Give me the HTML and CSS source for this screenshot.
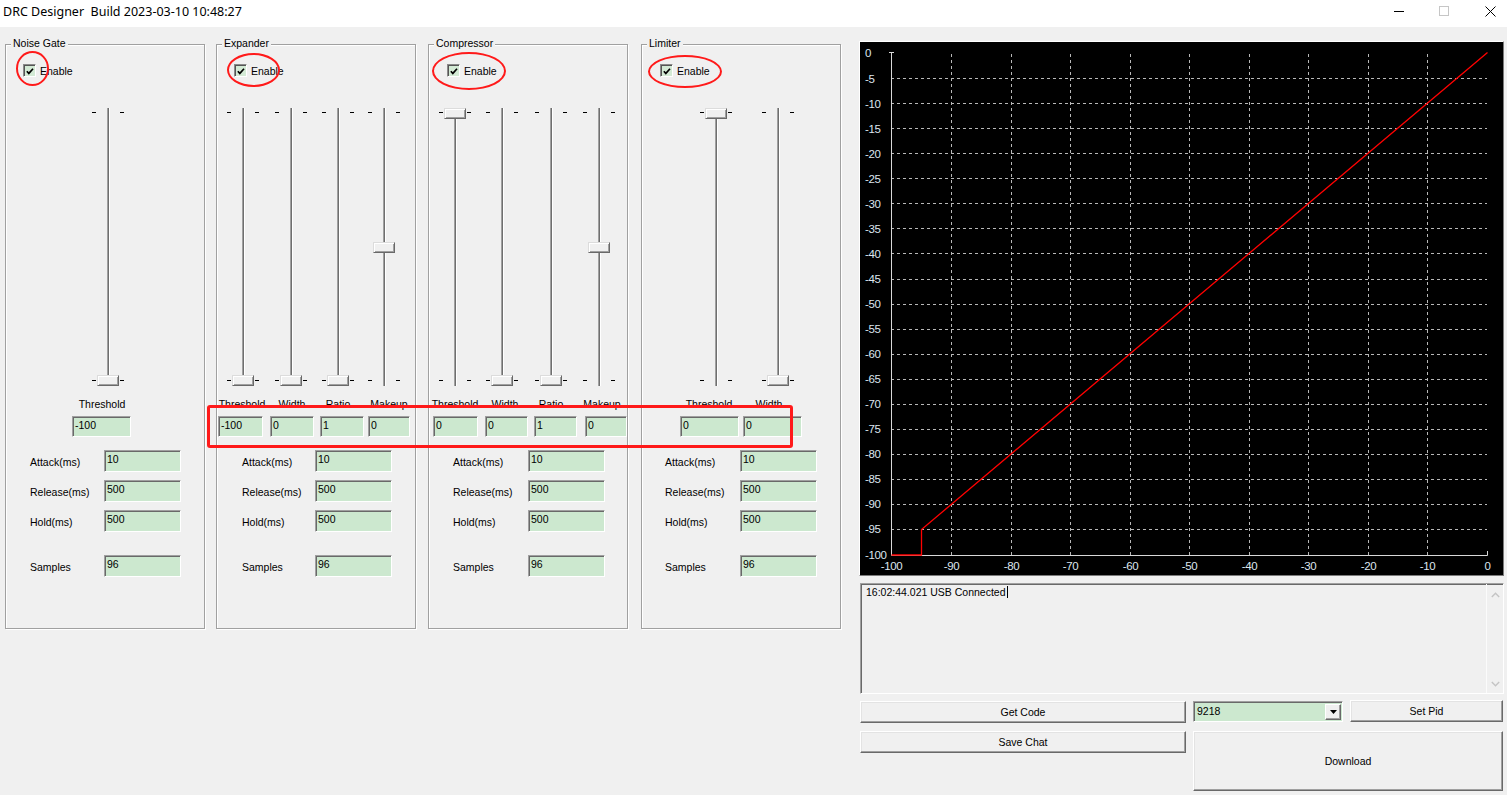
FILE: index.html
```html
<!DOCTYPE html>
<html lang="en">
<head>
<meta charset="utf-8">
<title>DRC Designer</title>
<link rel="stylesheet" href="styles.css">
</head>
<body>
<div class="window">
  <header class="titlebar">
    <span class="title">DRC Designer  Build 2023-03-10 10:48:27</span>
    <div class="wincontrols">
      <span class="wc-min"></span>
      <span class="wc-max"></span>
      <svg class="wc-close" width="11" height="11" viewBox="0 0 11 11"><path d="M0.5 0.5 L10.5 10.5 M10.5 0.5 L0.5 10.5" stroke="#000" stroke-width="1" fill="none"/></svg>
    </div>
  </header>

  <main class="client">
    <div class="groups">
      <!-- Noise Gate -->
      <section class="group ng">
        <span class="legend">Noise Gate</span>
        <label class="check"><span class="cb"><svg width="11" height="11" viewBox="0 0 11 11"><path d="M2 5.2 L4.2 7.6 L8.8 2.4" stroke="#000" stroke-width="1.8" fill="none"/></svg></span><span>Enable</span></label>
        <div class="sliders">
          <div class="slider"><span class="ticks"></span><span class="track"></span><span class="thumb bot"></span></div>
        </div>
        <div class="labels"><span>Threshold</span></div>
        <div class="edits"><span class="edit w59">-100</span></div>
        <div class="param first"><span class="plabel">Attack(ms)</span><span class="edit pedit">10</span></div>
        <div class="param"><span class="plabel">Release(ms)</span><span class="edit pedit">500</span></div>
        <div class="param"><span class="plabel">Hold(ms)</span><span class="edit pedit">500</span></div>
        <div class="param samples"><span class="plabel">Samples</span><span class="edit pedit">96</span></div>
      </section>

      <!-- Expander -->
      <section class="group exp">
        <span class="legend">Expander</span>
        <label class="check"><span class="cb"><svg width="11" height="11" viewBox="0 0 11 11"><path d="M2 5.2 L4.2 7.6 L8.8 2.4" stroke="#000" stroke-width="1.8" fill="none"/></svg></span><span>Enable</span></label>
        <div class="sliders">
          <div class="slider"><span class="ticks"></span><span class="track"></span><span class="thumb bot"></span></div>
          <div class="slider"><span class="ticks"></span><span class="track"></span><span class="thumb bot"></span></div>
          <div class="slider"><span class="ticks"></span><span class="track"></span><span class="thumb bot"></span></div>
          <div class="slider"><span class="ticks"></span><span class="track"></span><span class="thumb mid"></span></div>
        </div>
        <div class="labels"><span>Threshold</span><span>Width</span><span>Ratio</span><span>Makeup</span></div>
        <div class="edits"><span class="edit w45">-100</span><span class="edit w44">0</span><span class="edit w44">1</span><span class="edit w42">0</span></div>
        <div class="param first"><span class="plabel">Attack(ms)</span><span class="edit pedit">10</span></div>
        <div class="param"><span class="plabel">Release(ms)</span><span class="edit pedit">500</span></div>
        <div class="param"><span class="plabel">Hold(ms)</span><span class="edit pedit">500</span></div>
        <div class="param samples"><span class="plabel">Samples</span><span class="edit pedit">96</span></div>
      </section>

      <!-- Compressor -->
      <section class="group comp">
        <span class="legend">Compressor</span>
        <label class="check"><span class="cb"><svg width="11" height="11" viewBox="0 0 11 11"><path d="M2 5.2 L4.2 7.6 L8.8 2.4" stroke="#000" stroke-width="1.8" fill="none"/></svg></span><span>Enable</span></label>
        <div class="sliders">
          <div class="slider"><span class="ticks"></span><span class="track"></span><span class="thumb top"></span></div>
          <div class="slider"><span class="ticks"></span><span class="track"></span><span class="thumb bot"></span></div>
          <div class="slider"><span class="ticks"></span><span class="track"></span><span class="thumb bot"></span></div>
          <div class="slider"><span class="ticks"></span><span class="track"></span><span class="thumb mid"></span></div>
        </div>
        <div class="labels"><span>Threshold</span><span>Width</span><span>Ratio</span><span>Makeup</span></div>
        <div class="edits"><span class="edit w45">0</span><span class="edit w43">0</span><span class="edit w43">1</span><span class="edit w42">0</span></div>
        <div class="param first"><span class="plabel">Attack(ms)</span><span class="edit pedit">10</span></div>
        <div class="param"><span class="plabel">Release(ms)</span><span class="edit pedit">500</span></div>
        <div class="param"><span class="plabel">Hold(ms)</span><span class="edit pedit">500</span></div>
        <div class="param samples"><span class="plabel">Samples</span><span class="edit pedit">96</span></div>
      </section>

      <!-- Limiter -->
      <section class="group lim">
        <span class="legend">Limiter</span>
        <label class="check"><span class="cb"><svg width="11" height="11" viewBox="0 0 11 11"><path d="M2 5.2 L4.2 7.6 L8.8 2.4" stroke="#000" stroke-width="1.8" fill="none"/></svg></span><span>Enable</span></label>
        <div class="sliders">
          <div class="slider"><span class="ticks"></span><span class="track"></span><span class="thumb top"></span></div>
          <div class="slider"><span class="ticks"></span><span class="track"></span><span class="thumb bot"></span></div>
        </div>
        <div class="labels"><span>Threshold</span><span>Width</span></div>
        <div class="edits"><span class="edit w59">0</span><span class="edit w59">0</span></div>
        <div class="param first"><span class="plabel">Attack(ms)</span><span class="edit pedit">10</span></div>
        <div class="param"><span class="plabel">Release(ms)</span><span class="edit pedit">500</span></div>
        <div class="param"><span class="plabel">Hold(ms)</span><span class="edit pedit">500</span></div>
        <div class="param samples"><span class="plabel">Samples</span><span class="edit pedit">96</span></div>
      </section>
    </div>

    <div class="right">
      <div class="chart">
        <svg width="643" height="533" viewBox="0 0 643 533">
          <g stroke="#b8b8b8" stroke-width="1" stroke-dasharray="3 3" fill="none">
            <path d="M31 36.5H627M31 61.5H627M31 86.5H627M31 111.5H627M31 136.5H627M31 161.5H627M31 186.5H627M31 211.5H627M31 237.5H627M31 262.5H627M31 287.5H627M31 312.5H627M31 337.5H627M31 362.5H627M31 387.5H627M31 412.5H627M31 437.5H627M31 462.5H627M31 487.5H627"/>
            <path d="M91.5 12V513M151.5 12V513M210.5 12V513M270.5 12V513M329.5 12V513M389.5 12V513M448.5 12V513M508.5 12V513M567.5 12V513"/>
          </g>
          <g stroke="#d8d8d8" stroke-width="1" fill="none">
            <path d="M31.5 10V513.5H627.5V509"/>
            <path d="M29 10.5H34"/>
          </g>
          <polyline points="31.5,513 61.5,513 61.5,487.5 627.5,10.5" stroke="#ff0000" stroke-width="1.3" fill="none"/>
          <g class="ylab" fill="#dde6ef" font-family="Liberation Sans, Arial, sans-serif" font-size="11.5" letter-spacing="-0.4">
            <text x="5" y="15">0</text>
            <text x="5" y="40.5">-5</text>
            <text x="5" y="65.5">-10</text>
            <text x="5" y="90.5">-15</text>
            <text x="5" y="115.5">-20</text>
            <text x="5" y="140.5">-25</text>
            <text x="5" y="165.5">-30</text>
            <text x="5" y="190.5">-35</text>
            <text x="5" y="215.5">-40</text>
            <text x="5" y="241">-45</text>
            <text x="5" y="266">-50</text>
            <text x="5" y="291">-55</text>
            <text x="5" y="316">-60</text>
            <text x="5" y="341">-65</text>
            <text x="5" y="366">-70</text>
            <text x="5" y="391">-75</text>
            <text x="5" y="416">-80</text>
            <text x="5" y="441">-85</text>
            <text x="5" y="466">-90</text>
            <text x="5" y="491">-95</text>
            <text x="5" y="517">-100</text>
          </g>
          <g fill="#dde6ef" font-family="Liberation Sans, Arial, sans-serif" font-size="11.5" letter-spacing="-0.4" text-anchor="middle">
            <text x="31.5" y="528">-100</text>
            <text x="91.5" y="528">-90</text>
            <text x="151.5" y="528">-80</text>
            <text x="210.5" y="528">-70</text>
            <text x="270.5" y="528">-60</text>
            <text x="329.5" y="528">-50</text>
            <text x="389.5" y="528">-40</text>
            <text x="448.5" y="528">-30</text>
            <text x="508.5" y="528">-20</text>
            <text x="567.5" y="528">-10</text>
            <text x="627.5" y="528">0</text>
          </g>
        </svg>
      </div>

      <div class="log">
        <div class="logtext">16:02:44.021 USB Connected<span class="caret"></span></div>
        <div class="vscroll">
          <svg width="9" height="6" viewBox="0 0 9 6"><path d="M0.8 5 L4.5 1.2 L8.2 5" stroke="#c4c4c4" stroke-width="1.4" fill="none"/></svg>
          <svg width="9" height="6" viewBox="0 0 9 6"><path d="M0.8 1 L4.5 4.8 L8.2 1" stroke="#c4c4c4" stroke-width="1.4" fill="none"/></svg>
        </div>
      </div>

      <div class="buttons">
        <button class="btn getcode">Get Code</button>
        <div class="combo"><span class="combo-val">9218</span><span class="combo-btn"><svg width="7" height="4" viewBox="0 0 7 4"><path d="M0 0H7L3.5 4Z" fill="#000"/></svg></span></div>
        <button class="btn setpid">Set Pid</button>
        <button class="btn savechat">Save Chat</button>
        <button class="btn download">Download</button>
      </div>
    </div>
  </main>

  <div class="annot">
    <span class="ring ring-ng"></span>
    <span class="ring ring-exp"></span>
    <span class="ring ring-comp"></span>
    <span class="ring ring-lim"></span>
    <span class="rect-mark"></span>
  </div>
</div>
</body>
</html>
```

FILE: styles.css
```css
* { box-sizing: border-box; }
html, body { margin: 0; padding: 0; }
body {
  width: 1507px;
  height: 795px;
  overflow: hidden;
  background: #f0f0f0;
  font-family: "Liberation Sans", Arial, sans-serif;
  font-size: 10.5px;
  color: #000;
}
.window { position: relative; width: 1507px; height: 795px; }

/* title bar */
.titlebar {
  height: 27px;
  background: #fff;
  display: flex;
  align-items: flex-start;
  padding-left: 3px;
}
.title {
  font-family: "Noto Sans", sans-serif;
  font-size: 12.5px;
  line-height: 17px;
  margin-top: 3px;
  white-space: pre;
}
.wincontrols {
  margin-left: auto;
  display: flex;
  align-items: flex-start;
  padding-right: 11px;
}
.wc-min { width: 10px; height: 1px; background: #000; margin-top: 11px; margin-right: 35px; }
.wc-max { width: 10px; height: 10px; border: 1px solid #c6c6c6; margin-top: 6px; margin-right: 36px; }
.wc-close { display: block; margin-top: 6px; }

/* client */
.client { display: flex; padding-left: 5px; }
.groups { display: flex; margin-top: 17px; }

.group {
  position: relative;
  width: 200px;
  height: 585px;
  border: 1px solid #a0a0a0;
  box-shadow: inset 1px 1px #fff, 1px 1px #fff;
  display: flex;
  flex-direction: column;
}
.exp { margin-left: 11px; }
.comp { margin-left: 12px; }
.lim { margin-left: 13px; }

.legend {
  position: absolute;
  top: -8px;
  left: 5px;
  padding: 0 2px;
  line-height: 13px;
  background: #f0f0f0;
}

.check {
  display: flex;
  align-items: center;
  height: 13px;
  margin-top: 19px;
  margin-left: 17px;
  gap: 4px;
}
.comp .check, .lim .check { margin-left: 18px; }
.cb {
  width: 13px;
  height: 13px;
  background: #d3ead5;
  border: 1px solid;
  border-color: #8a8a8a #fff #fff #8a8a8a;
  box-shadow: inset 1px 1px #555;
  display: flex;
  align-items: center;
  justify-content: center;
}
.cb svg { display: block; margin: 1px 0 0 1px; }

/* sliders */
.sliders {
  display: grid;
  margin-top: 31px;
  height: 279px;
}
.ng .sliders { padding-left: 82px; grid-template-columns: 40px; }
.exp .sliders { padding-left: 6px; grid-template-columns: 48px 47px 46px 40px; }
.comp .sliders { padding-left: 6px; grid-template-columns: 47px 49px 48px 40px; }
.lim .sliders { padding-left: 54px; grid-template-columns: 62px 40px; }

.slider { position: relative; width: 40px; height: 279px; }
.track {
  position: absolute;
  left: 19px;
  top: 0;
  width: 3px;
  height: 278px;
  background: linear-gradient(to right, #a0a0a0 0 1px, #6f6f6f 1px 2px, #fff 2px 3px);
}
.ticks {
  position: absolute;
  left: 4px;
  top: 4px;
  width: 4px;
  height: 1px;
  background: #000;
  box-shadow: 28px 0 #000, 0 268px #000, 28px 268px #000;
}
.thumb {
  position: absolute;
  left: 9px;
  width: 22px;
  height: 11px;
  background: #f0f0f0;
  border: 1px solid;
  border-color: #dcdcdc #696969 #696969 #dcdcdc;
  box-shadow: inset 1px 1px #fff, inset -1px -1px #a0a0a0;
}
.thumb.top { top: 0; }
.thumb.mid { top: 134px; }
.thumb.bot { top: 267px; }

/* labels under sliders */
.labels {
  display: grid;
  margin-top: 11px;
  height: 13px;
  line-height: 13px;
}
.labels span { width: 48px; text-align: center; white-space: nowrap; }
.ng .labels { padding-left: 72px; grid-template-columns: 48px; }
.exp .labels { padding-left: 1px; grid-template-columns: 50px 46px 51px 48px; }
.comp .labels { padding-left: 2px; grid-template-columns: 50px 46px 51px 48px; }
.lim .labels { padding-left: 43px; grid-template-columns: 60px 48px; }

/* edits */
.edit {
  display: block;
  height: 21px;
  background: #cce8cf;
  border: 1px solid;
  border-color: #a0a0a0 #fff #fff #a0a0a0;
  box-shadow: inset 1px 1px #696969;
  padding: 2px 0 0 2px;
  line-height: 13px;
  white-space: nowrap;
  overflow: hidden;
}
.edits { display: grid; margin-top: 5px; height: 21px; }
.ng .edits { padding-left: 66px; grid-template-columns: 59px; }
.exp .edits { padding-left: 1px; grid-template-columns: 52px 50px 48px 42px; }
.comp .edits { padding-left: 4px; grid-template-columns: 52px 49px 51px 42px; }
.lim .edits { padding-left: 38px; grid-template-columns: 63px 59px; }
.w59 { width: 59px; }
.w45 { width: 45px; }
.w44 { width: 44px; }
.w43 { width: 43px; }
.w42 { width: 42px; }

/* parameter rows */
.ng { --pl: 24px; --pe: 98px; }
.exp { --pl: 25px; --pe: 98px; }
.comp { --pl: 24px; --pe: 99px; }
.lim { --pl: 23px; --pe: 98px; }
.param {
  display: flex;
  align-items: center;
  height: 22px;
  margin-top: 8px;
  padding-left: var(--pl);
}
.param.first { margin-top: 13px; }
.param.samples { margin-top: 23px; }
.plabel { width: calc(var(--pe) - var(--pl)); white-space: nowrap; padding-top: 1px; }
.pedit { width: 77px; height: 22px; }

/* right panel */
.right {
  margin-left: 18px;
  width: 645px;
  display: flex;
  flex-direction: column;
}
.chart {
  margin-top: 14px;
  width: 645px;
  height: 535px;
  background: #000;
  border: 1px solid;
  border-color: #fff #7a7a7a #7a7a7a #fff;
}
.chart svg { display: block; }

.log {
  margin-top: 7px;
  margin-left: 1px;
  width: 644px;
  height: 111px;
  display: flex;
  border: 1px solid;
  border-color: #a0a0a0 #fff #fff #a0a0a0;
  box-shadow: inset 1px 1px #696969;
  background: #f0f0f0;
}
.logtext {
  flex: 1;
  padding: 2px 0 0 5px;
  line-height: 13px;
  white-space: nowrap;
}
.caret {
  display: inline-block;
  width: 1px;
  height: 12px;
  background: #000;
  vertical-align: -2px;
  margin-left: 1px;
}
.vscroll {
  width: 17px;
  border-left: 1px solid #fbfbfb;
  display: flex;
  flex-direction: column;
  justify-content: space-between;
  align-items: center;
  padding: 8px 0 6px;
}
.vscroll svg { display: block; }

.buttons {
  margin-top: 7px;
  margin-left: 1px;
  display: grid;
  grid-template-columns: 326px 150px 153px;
  grid-template-rows: 22px 60px;
  column-gap: 7px;
  row-gap: 8px;
}
.btn {
  font: inherit;
  color: #000;
  margin: 0;
  padding: 0;
  background: #f0f0f0;
  border: 1px solid;
  border-color: #fff #696969 #696969 #fff;
  box-shadow: inset -1px -1px #a0a0a0, inset 1px 1px #e3e3e3;
  display: flex;
  align-items: center;
  justify-content: center;
}
.getcode { height: 22px; }
.setpid { height: 22px; margin-top: -1px; }
.savechat { grid-column: 1; grid-row: 2; height: 22px; align-self: start; }
.download { grid-column: 2 / 4; grid-row: 2; height: 60px; }

.combo {
  height: 21px;
  background: #cce8cf;
  border: 1px solid;
  border-color: #a0a0a0 #fff #fff #a0a0a0;
  box-shadow: inset 1px 1px #696969;
  display: flex;
  align-items: stretch;
  padding: 2px 1px 1px 2px;
}
.combo-val { flex: 1; line-height: 14px; padding-left: 1px; }
.combo-btn {
  width: 16px;
  background: #f0f0f0;
  border: 1px solid;
  border-color: #fff #696969 #696969 #fff;
  box-shadow: inset -1px -1px #a0a0a0;
  display: flex;
  align-items: center;
  justify-content: center;
}
.combo-btn svg { display: block; }

/* red annotations */
.annot { position: absolute; left: 0; top: 0; width: 0; height: 0; }
.ring {
  position: absolute;
  border: 2.5px solid #ff1a1a;
  border-radius: 50%;
}
.ring-ng { left: 16px; top: 51px; width: 33px; height: 35px; }
.ring-exp { left: 227px; top: 53px; width: 53px; height: 34px; }
.ring-comp { left: 432px; top: 52px; width: 74px; height: 38px; }
.ring-lim { left: 648px; top: 55px; width: 74px; height: 33px; }
.rect-mark {
  position: absolute;
  left: 207px;
  top: 405px;
  width: 586px;
  height: 43px;
  border: 3px solid #ff1a1a;
  border-radius: 3px;
}
```
